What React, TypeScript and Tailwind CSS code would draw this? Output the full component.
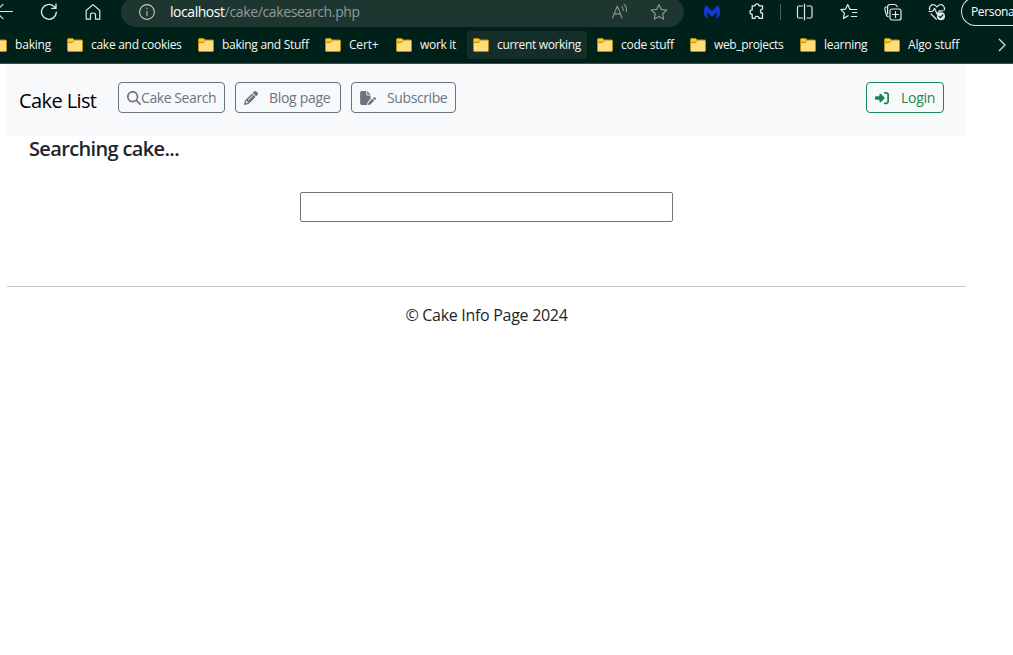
import React from 'react';
import { FaMagnifyingGlass, FaPencil, FaFilePen, FaRightToBracket } from 'react-icons/fa6';

type IconProps = { className?: string; children: React.ReactNode; box?: string; stroke?: number };

function Icon({ className = '', children, box = '0 0 18 18', stroke = 1.1 }: IconProps) {
  return (
    <svg
      viewBox={box}
      className={`h-[18px] w-[18px] shrink-0 ${className}`}
      fill="none"
      stroke="currentColor"
      strokeWidth={stroke}
      strokeLinecap="round"
      strokeLinejoin="round"
    >
      {children}
    </svg>
  );
}

function Folder() {
  return (
    <svg viewBox="0 0 16 14" className="h-[14px] w-4 shrink-0">
      <path d="M.5 12.5V1.5Q.5.5 1.5.5H5.8L7.3 2H14.5Q15.5 2 15.5 3V12.5Q15.5 13.5 14.5 13.5H1.5Q.5 13.5.5 12.5Z" fill="#ffdc7c" stroke="#b98a08" />
      <path d="M1 1H5.6L7 2.4 5.5 4H1Z" fill="#fbc62f" />
      <path d="M1 4.4H5.4L7.5 2.4" fill="none" stroke="#b98a08" />
    </svg>
  );
}

const bookmarks = [
  { label: 'baking', width: 'w-[76px]', text: 'tracking-[-0.19px]' },
  { label: 'cake and cookies', width: 'w-[131px]', text: 'tracking-[-0.28px]' },
  { label: 'baking and Stuff', width: 'w-[127px]', text: 'tracking-[-0.28px]' },
  { label: 'Cert+', width: 'w-[71px]', text: 'tracking-[-0.19px]' },
  { label: 'work it', width: 'w-[77px]', text: 'tracking-[-0.3px]' },
  { label: 'current working', width: 'w-[124px]', text: 'tracking-[-0.34px]', active: true },
  { label: 'code stuff', width: 'w-[93px]', text: 'tracking-[-0.28px]' },
  { label: 'web_projects', width: 'w-[110px]', text: 'tracking-[-0.36px]' },
  { label: 'learning', width: 'w-[84px]', text: 'tracking-[-0.3px]' },
  { label: 'Algo stuff', width: 'w-[90px]', text: 'tracking-[-0.19px]' },
];

function Toolbar() {
  return (
    <div className="flex h-[27px] items-start overflow-hidden text-[#e4e9e8]">
      <Icon className="-ml-[5px] mt-[3px]">
        <path d="M17.5 8.5H1M8 1.3.8 8.5 8 15.7" />
      </Icon>
      <Icon className="ml-[27px] mt-[3px]" stroke={1.3}>
        <path d="M16.3 9.2A7.4 7.4 0 1 1 13.8 3.3L16 5.3M16 1V5.3H11.7" />
      </Icon>
      <Icon className="ml-[26px] mt-[3px]" stroke={1.2}>
        <path d="M2.2 7.5 9 1.6 15.8 7.5V16.2H11.5V11.5Q11.5 10 9 10T6.5 11.5V16.2H2.2Z" />
      </Icon>
      <div className="-mt-[3px] ml-[19px] flex h-[30px] w-[563px] shrink-0 items-center rounded-full bg-[#1d3630] pl-[17px] pr-4">
        <Icon className="text-[#c3cbc9]">
          <circle cx="9" cy="9" r="7.4" />
          <path d="M9 8.2V12.6M9 5.3V5.6" stroke="#909c99" strokeWidth="1.5" />
        </Icon>
        <div className="ml-[14px] whitespace-nowrap text-[14px] leading-[18px] text-[#909c98]">
          <span className="tracking-[-0.45px] text-white">localhost</span>
          <span className="tracking-[-0.36px]">/cake/cakesearch.php</span>
        </div>
        <Icon className="ml-auto text-[#8b9794]">
          <path d="M1.5 15 6.3 3.1 11.1 15M3.2 10.9H9.4M10.9 3.6Q12.6 5.2 12.2 7.6M13 1.4Q16.2 4.2 15.3 8.6" />
        </Icon>
        <Icon className="ml-[21px] text-[#8b9794]" stroke={1.2}>
          <path d="M9 1.5 11.3 6.4 16.7 7 12.7 10.8 13.7 16.2 9 13.5 4.3 16.2 5.3 10.8 1.3 7 6.7 6.4Z" />
        </Icon>
      </div>
      <Icon className="ml-[19px] mt-[3px] text-[#1639cf]">
        <path d="M4.5 15.2C.8 12.8 0 7.3 3.1 3L9 8.7 14.9 3C18 7.3 17.2 12.8 13.5 15.2 14.9 12.6 14.5 10.5 13.6 8.6L9 13.1 4.4 8.6C3.5 10.5 3.1 12.6 4.5 15.2Z" fill="currentColor" />
      </Icon>
      <Icon className="ml-[27px] mt-[3px]" stroke={1.3}>
        <path d="M4.2 2.8H7A2 2 0 0 1 11 2.8H14.5V6.2A2 2 0 0 0 14.5 10.2V15.3H11A2 2 0 0 0 7 15.3H4.2V11.3A2.2 2.2 0 1 1 4.2 6.9Z" />
      </Icon>
      <div className="ml-[14px] mt-1 h-4 w-px shrink-0 bg-[#47605a]" />
      <Icon className="ml-[15px] mt-[3px]" stroke={1.2}>
        <path d="M6.5 3H3Q1.5 3 1.5 4.5V13.5Q1.5 15 3 15H6.5M11 3H14.5Q16 3 16 4.5V13.5Q16 15 14.5 15H11M8.5 1V17" />
      </Icon>
      <Icon className="ml-[26px] mt-[3px]" stroke={1.2}>
        <path d="M11.5 6.5H16.8M12.5 9.5H16.8M11.3 13.5H16.8M10.8 6.3H9.8L7.7 1.5 5.6 6.1.9 6.6 4.4 10.1 3.5 15.4 8.2 12.8" />
      </Icon>
      <Icon className="ml-[26px] mt-[3px]" stroke={1.2}>
        <rect x="6" y="6" width="11" height="11" rx="2" />
        <path d="M11.5 8.6V14.4M8.6 11.5H14.4M4.2 13.6Q2.7 13.2 2.3 11.8L.9 6.2Q.6 4.5 2.2 3.9M3.6 11V4Q3.6 1.5 6 1.5H10.5Q12.8 1.5 13.2 3.6" />
      </Icon>
      <Icon className="ml-[26px] mt-[3px]" stroke={1.2}>
        <path d="M1.7 6.7Q1 4.5 2.6 2.9C4.8.7 7.3 1.7 9 4 10.7 1.7 13.2.7 15.4 2.9Q17 4.5 16.3 7M3 11 8.4 16.2M1 8.5H4.5L6.6 5.4 9.2 11.2 11.5 7.8H15" />
        <circle cx="13" cy="13.2" r="4" fill="currentColor" stroke="none" />
        <path d="M11.2 13.4 12.5 14.7 14.8 12" stroke="#00201a" />
      </Icon>
      <div className="-mt-[3px] ml-[15px] flex h-[29px] w-[52px] shrink-0 items-center rounded-l-full border-y border-l border-[#d7dfdd] pl-[9px] text-[12px] tracking-[-0.35px] text-white">
        Persona
      </div>
    </div>
  );
}

function Bookmarks() {
  return (
    <div className="flex h-[37px] items-start overflow-hidden border-b border-[#36504a] pt-1">
      <div className="-ml-[15px] flex">
        {bookmarks.map((b) => (
          <div key={b.label} className={`shrink-0 ${b.width}`}>
            <div className={`flex h-7 items-center gap-2 whitespace-nowrap rounded-[3px] pl-1.5 ${b.active ? 'mr-1 bg-[#142e29]' : ''}`}>
              <Folder />
              <span className={`text-[12px] leading-4 text-[#f5f7f6] ${b.text}`}>{b.label}</span>
            </div>
          </div>
        ))}
      </div>
      <svg viewBox="0 0 8 14" className="ml-[30px] mt-[7px] h-[14px] w-2 shrink-0" fill="none" stroke="#d5dcda" strokeWidth="1.3">
        <path d="M1 1 7 7 1 13" />
      </svg>
    </div>
  );
}

const button = 'flex h-[31px] items-center whitespace-nowrap rounded-[4px] border text-[14px] leading-5';

export default function App() {
  return (
    <div className="flex h-[655px] w-[1013px] flex-col overflow-hidden bg-white font-['Open_Sans','Noto_Sans',sans-serif] text-[#212529]">
      <header className="h-16 shrink-0 bg-[#00201a]">
        <Toolbar />
        <Bookmarks />
      </header>
      <main className="ml-[7px] w-[959px]">
        <nav className="flex h-[72px] items-start bg-[#f8f9fa] pl-3 pr-[22px] pt-[18px]">
          <span className="mt-1 w-[99px] whitespace-nowrap text-[20px] leading-[30px] tracking-[-0.6px] text-black">Cake List</span>
          <div className="flex gap-[10px] text-[#6c757d]">
            <button className={`${button} w-[107px] border-[#6c757d] pl-2`}>
              <FaMagnifyingGlass className="h-[14px] w-[14px]" />
              <span className="tracking-[-0.42px]">Cake Search</span>
            </button>
            <button className={`${button} w-[106px] border-[#6c757d] pl-2`}>
              <FaPencil className="h-[14px] w-[14px]" />
              <span className="ml-[11px] tracking-[-0.3px]">Blog page</span>
            </button>
            <button className={`${button} w-[105px] border-[#6c757d] pl-2`}>
              <FaFilePen className="h-[14px] w-4" />
              <span className="ml-[11px] tracking-[-0.4px]">Subscribe</span>
            </button>
          </div>
          <button className={`${button} ml-auto w-[78px] border-[#198754] pl-2 text-[#198754]`}>
            <FaRightToBracket className="h-[14px] w-[14px]" />
            <span className="ml-[12px] tracking-[-0.3px]">Login</span>
          </button>
        </nav>
        <h1 className="ml-[22px] h-14 whitespace-nowrap text-[20px] font-semibold leading-[26px] tracking-[-0.64px]">Searching cake...</h1>
        <input className="ml-[293px] block h-[30px] w-[373px] rounded-[2px] border border-[#767676] bg-white px-1 outline-none" />
        <hr className="mt-[64px] border-[#c7c8c9]" />
        <footer className="mt-4 text-center text-[16px] leading-6 tracking-[-0.3px]">© Cake Info Page 2024</footer>
      </main>
    </div>
  );
}
